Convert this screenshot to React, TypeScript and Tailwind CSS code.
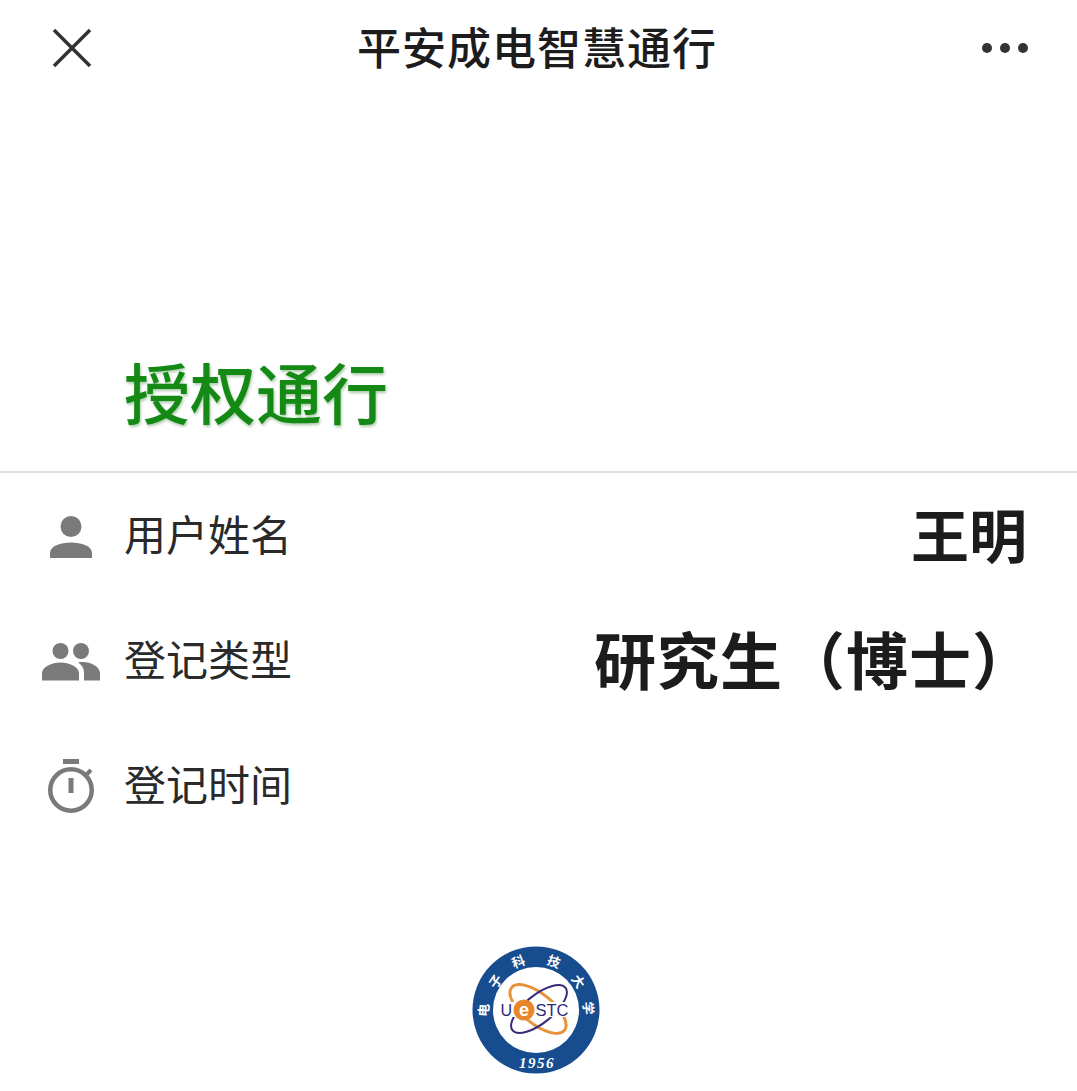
const cjk = "font-['Noto_Sans_CJK_SC','Noto_Sans',sans-serif]"

const UserIcon = () => (
  <svg width="42" height="42" viewBox="0 0 42 42" className="fill-[#7a7a7a]">
    <circle cx="21" cy="10.500" r="10.500" />
    <path d="M0 42v-5c0-7 10.500-10.500 21-10.500S42 30 42 37v5z" />
  </svg>
)

const GroupIcon = () => (
  <svg width="58" height="38" viewBox="0 0 58 38" className="fill-[#7a7a7a]">
    <circle cx="18.500" cy="8" r="8" />
    <circle cx="39" cy="8" r="8" />
    <path d="M0 37.500v-7c0-7 10-11 18.500-11S37 23.500 37 30.500v7z" />
    <path d="M42 37.500v-8c0-4-2-7.500-6-10 1.500-.4 3-.5 4.500-.5C49 19 58 23.500 58 30.500v7z" />
  </svg>
)

const TimerIcon = () => (
  <svg width="48" height="55" viewBox="0 0 48 55" fill="none" className="stroke-[#7a7a7a]">
    <path d="M16 2.500h16" strokeWidth="5" />
    <circle cx="24" cy="31" r="20.750" strokeWidth="4.500" />
    <path d="M24 19v15" strokeWidth="5" />
    <path d="M39 16l5-5" strokeWidth="4" />
  </svg>
)

const sealChars = [
  { ch: '电', x: 11, y: 64, r: -86 },
  { ch: '子', x: 23, y: 35, r: -56 },
  { ch: '科', x: 46, y: 15, r: -21 },
  { ch: '技', x: 82, y: 15, r: 21 },
  { ch: '大', x: 107, y: 35, r: 56 },
  { ch: '学', x: 117, y: 62, r: 86 },
]

const Logo = () => (
  <svg width="128" height="128" viewBox="0 0 128 128">
    <circle cx="64" cy="64" r="63.500" fill="#174d8f" />
    <circle cx="64" cy="64" r="43" fill="#fff" />
    <ellipse cx="66" cy="63" rx="34" ry="15" transform="rotate(39 66 63)" fill="none" stroke="#e8923a" strokeWidth="3" />
    <ellipse cx="67" cy="63" rx="34" ry="14" transform="rotate(-39 67 63)" fill="none" stroke="#3a2a78" strokeWidth="2" />
    <rect x="27" y="56" width="72" height="15" fill="#fff" />
    <text x="28.500" y="69.500" fontSize="16" fill="#2d2a7a" fontFamily="Liberation Sans">U</text>
    <circle cx="52" cy="64" r="10.500" fill="#e8862c" />
    <text x="52" y="70" fontSize="18" fontWeight="700" fill="#fff" fontFamily="Liberation Sans" textAnchor="middle">e</text>
    <text x="63.500" y="69.500" fontSize="16.500" fill="#2d2a7a" fontFamily="Liberation Sans">STC</text>
    <g fontSize="13" fill="#fff" fontFamily="Noto Sans CJK SC" fontWeight="700" textAnchor="middle">
      {sealChars.map((c) => (
        <text key={c.ch} x={c.x} y={c.y} dominantBaseline="central" transform={`rotate(${c.r} ${c.x} ${c.y})`}>
          {c.ch}
        </text>
      ))}
    </g>
    <text x="65" y="122" fontSize="15" fill="#fff" fontStyle="italic" fontWeight="700" fontFamily="Liberation Serif" textAnchor="middle" letterSpacing="1.500">1956</text>
  </svg>
)

const rows = [
  { label: '用户姓名', icon: <UserIcon />, value: '王明', size: 'text-[58px]' },
  { label: '登记类型', icon: <GroupIcon />, value: '研究生（博士）', size: 'mr-[-8px] text-[62px] tracking-[1px]' },
  { label: '登记时间', icon: <TimerIcon />, value: '', size: '' },
]

export default function App() {
  return (
    <div className={`flex h-[1091px] w-[1077px] flex-col overflow-hidden bg-white ${cjk}`}>
      {/* Header */}
      <div className="flex h-[96px] items-center justify-between pl-[52px] pr-[49px]">
        <svg width="40" height="40" viewBox="0 0 40 40" fill="none" stroke="#333" strokeWidth="3.500">
          <path d="M2 2l36 36M38 2L2 38" />
        </svg>
        <h1 className="pb-[4px] text-[44px] leading-none font-medium tracking-[1px] text-[#1c1c1c]">平安成电智慧通行</h1>
        <div className="flex gap-[8px]">
          <span className="h-[10px] w-[10px] rounded-full bg-[#333]" />
          <span className="h-[10px] w-[10px] rounded-full bg-[#333]" />
          <span className="h-[10px] w-[10px] rounded-full bg-[#333]" />
        </div>
      </div>

      {/* Status */}
      <div className="flex h-[377px] items-end border-b-2 border-[#dedede] pb-[36px] pl-[124px]">
        <div className="text-[66px] leading-[90px] font-medium text-[#148a14] [text-shadow:1px_2px_3px_rgba(20,100,20,0.35)]">授权通行</div>
      </div>

      {/* Details */}
      <div className="flex flex-col pt-[1px]">
        {rows.map((row) => (
          <div key={row.label} className="flex h-[125px] items-center pr-[50px]">
            <div className="flex w-[124px] justify-center pl-[18px]">{row.icon}</div>
            <span className="pb-[7px] text-[42px] leading-none text-[#2a2a2a]">{row.label}</span>
            <span className={`ml-auto pb-[8px] leading-none font-bold text-[#1c1c1c] ${row.size}`}>{row.value}</span>
          </div>
        ))}
      </div>

      {/* Logo */}
      <div className="mt-[97px] flex justify-center pr-[5px]">
        <Logo />
      </div>
    </div>
  )
}
